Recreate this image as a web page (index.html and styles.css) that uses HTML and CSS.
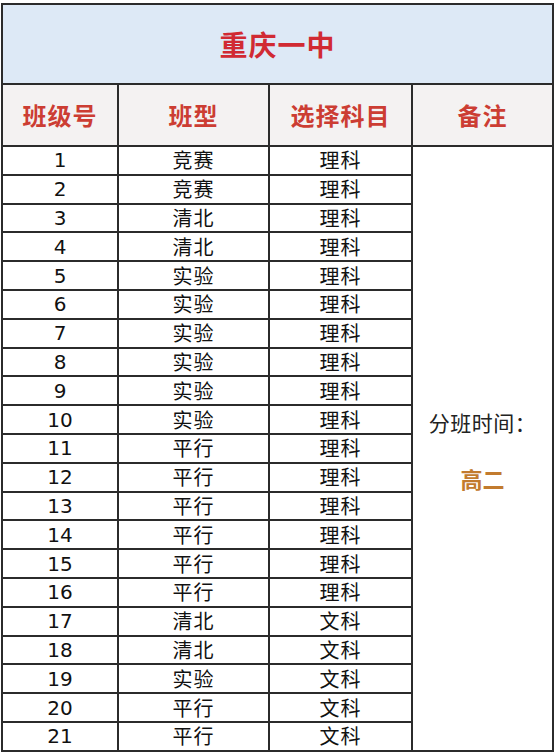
FILE: index.html
```html
<!DOCTYPE html>
<html lang="zh">
<head>
<meta charset="utf-8">
<link rel="stylesheet" href="styles.css">
</head>
<body>
<table class="sheet">
  <colgroup>
    <col class="c1"><col class="c2"><col class="c3"><col class="c4">
  </colgroup>
  <tr class="title-row"><td colspan="4" class="title">重庆一中</td></tr>
  <tr class="head-row">
    <th>班级号</th><th>班型</th><th>选择科目</th><th>备注</th>
  </tr>
  <tr><td>1</td><td>竞赛</td><td>理科</td>
    <td rowspan="21" class="note"><div class="note-inner"><span class="note-label">分班时间：</span><span class="note-value">高二</span></div></td></tr>
  <tr><td>2</td><td>竞赛</td><td>理科</td></tr>
  <tr><td>3</td><td>清北</td><td>理科</td></tr>
  <tr><td>4</td><td>清北</td><td>理科</td></tr>
  <tr><td>5</td><td>实验</td><td>理科</td></tr>
  <tr><td>6</td><td>实验</td><td>理科</td></tr>
  <tr><td>7</td><td>实验</td><td>理科</td></tr>
  <tr><td>8</td><td>实验</td><td>理科</td></tr>
  <tr><td>9</td><td>实验</td><td>理科</td></tr>
  <tr><td>10</td><td>实验</td><td>理科</td></tr>
  <tr><td>11</td><td>平行</td><td>理科</td></tr>
  <tr><td>12</td><td>平行</td><td>理科</td></tr>
  <tr><td>13</td><td>平行</td><td>理科</td></tr>
  <tr><td>14</td><td>平行</td><td>理科</td></tr>
  <tr><td>15</td><td>平行</td><td>理科</td></tr>
  <tr><td>16</td><td>平行</td><td>理科</td></tr>
  <tr><td>17</td><td>清北</td><td>文科</td></tr>
  <tr><td>18</td><td>清北</td><td>文科</td></tr>
  <tr><td>19</td><td>实验</td><td>文科</td></tr>
  <tr><td>20</td><td>平行</td><td>文科</td></tr>
  <tr><td>21</td><td>平行</td><td>文科</td></tr>
</table>
</body>
</html>
```
FILE: styles.css
```css
html, body {
  margin: 0;
  padding: 0;
  background: #ffffff;
}
body {
  padding: 3px 0 0 1px;
  font-family: "DejaVu Sans", "Noto Sans CJK SC", sans-serif;
}
.sheet {
  border-collapse: collapse;
  table-layout: fixed;
  width: 551px;
  border: 2px solid #2b2b2b;
}
.c1 { width: 116px; }
.c2 { width: 151px; }
.c3 { width: 143px; }
.c4 { width: 141px; }
.sheet td, .sheet th {
  border: 2px solid #2b2b2b;
  padding: 0;
  text-align: center;
  vertical-align: middle;
  font-size: 20px;
  line-height: 1;
  font-weight: normal;
  color: #111;
  height: 26.8px;
}
.sheet td:first-child {
  font-family: "DejaVu Sans", sans-serif;
  font-size: 20px;
}
.sheet td:not(:first-child) {
  font-family: "Noto Sans CJK SC", sans-serif;
  font-weight: 400;
  letter-spacing: 1px;
}
.sheet td.title {
  height: 78px;
  background: #dde9f6;
  color: #d12a33;
  font-family: "Noto Sans CJK SC", sans-serif;
  font-weight: 700;
  font-size: 28px;
  letter-spacing: 1px;
}
.sheet th {
  height: 60px;
  background: #f4f2f2;
  color: #cc3d33;
  font-family: "Noto Sans CJK SC", sans-serif;
  font-weight: 700;
  font-size: 24px;
  letter-spacing: 1px;
}
.sheet td.note {
  background: #ffffff;
  letter-spacing: 0;
}
.note-inner {
  display: flex;
  flex-direction: column;
  align-items: center;
  gap: 34px;
  padding-top: 4px;
}
.note-label {
  font-family: "Noto Sans CJK SC", sans-serif;
  font-size: 21px;
  color: #222;
  letter-spacing: 0.5px;
}
.note-value {
  font-family: "Noto Sans CJK SC", sans-serif;
  font-size: 22px;
  font-weight: 700;
  color: #c27b2e;
}
```
